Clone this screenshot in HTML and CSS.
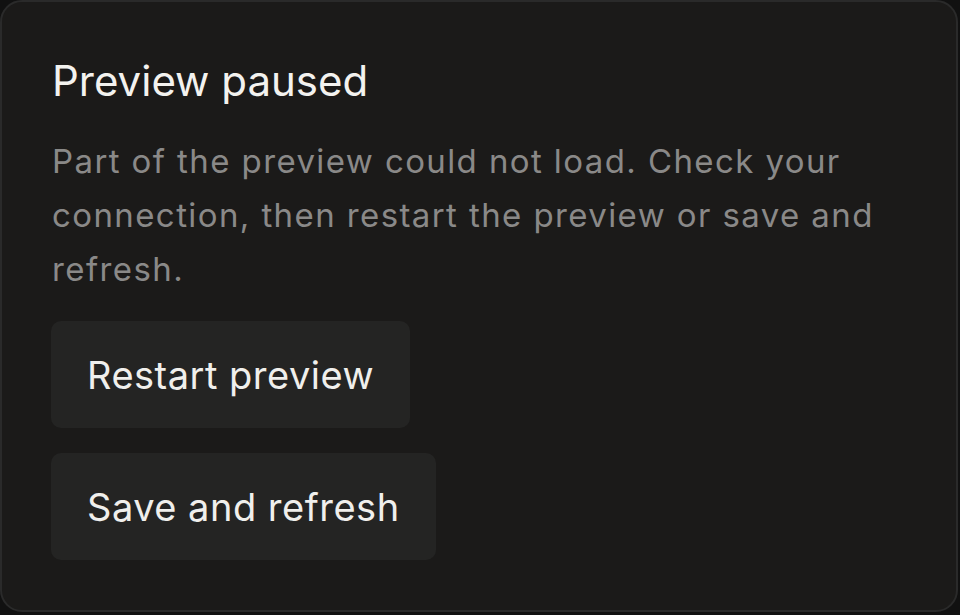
FILE: index.html
```html
<!DOCTYPE html>
<html lang="en">
<head>
<meta charset="utf-8">
<title>Preview paused</title>
<link rel="stylesheet" href="styles.css">
</head>
<body>
<div class="card">
  <h1 class="title">Preview paused</h1>
  <p class="message">Part of the preview could not load. Check your connection, then restart the preview or save and refresh.</p>
  <div class="actions">
    <button class="btn" type="button">Restart preview</button>
    <button class="btn" type="button">Save and refresh</button>
  </div>
</div>
</body>
</html>
```

FILE: styles.css
```css
html, body {
  margin: 0;
  padding: 0;
  background: #111111;
}
body {
  width: 960px;
  height: 615px;
  font-family: Inter, "Noto Sans", sans-serif;
}
.card {
  box-sizing: border-box;
  width: 958px;
  height: 612px;
  background: #1b1a19;
  border: 2px solid #2a2a2a;
  border-radius: 22px;
  padding: 54px 50px 0 49px;
}
.title {
  margin: 0 0 0 1px;
  font-size: 42px;
  line-height: 50px;
  font-weight: 400;
  color: #f3f2ef;
}
.message {
  margin: 28px 0 0 1px;
  font-size: 33px;
  line-height: 54px;
  letter-spacing: 1.4px;
  color: #8a8988;
  max-width: 850px;
}
.actions {
  margin-top: 25px;
  display: flex;
  flex-direction: column;
  align-items: flex-start;
  gap: 25px;
}
.btn {
  font-family: inherit;
  font-size: 38px;
  line-height: 46px;
  letter-spacing: 0.5px;
  color: #f0efec;
  background: #242423;
  border: none;
  border-radius: 10px;
  padding: 31px 36px 30px 36px;
  cursor: pointer;
}
```
